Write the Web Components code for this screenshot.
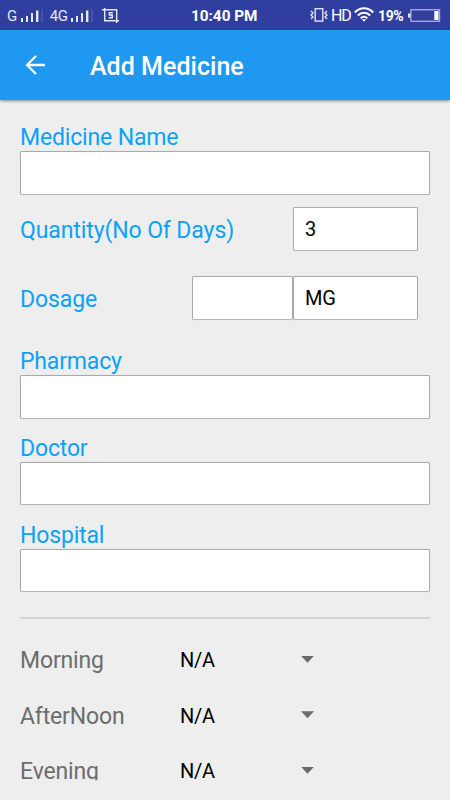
<!DOCTYPE html>
<html lang="en">
<head>
<meta charset="utf-8">
<title>Add Medicine</title>
<style>
html, body { margin: 0; height: 100%; overflow: hidden; background: #eeeeee; }
body { font-family: Roboto, "Noto Sans", sans-serif; color: #000; }
</style>
</head>
<body>
<medicine-screen></medicine-screen>
<script>
const define = (name, html) => customElements.define(name, class extends HTMLElement {
  constructor() {
    super();
    const t = document.createElement('template');
    t.innerHTML = html;
    this.attachShadow({ mode: 'open' }).append(t.content.cloneNode(true));
  }
});

define('signal-bars', `
<style>:host{display:block;width:23px;height:14px} svg{display:block}</style>
<svg width="23" height="14" viewBox="0 0 23 14"><g fill="#e4e7f8">
<rect x="0" y="9" width="2" height="4"/><rect x="5" y="7" width="2" height="6"/>
<rect x="10" y="4" width="2" height="9"/><rect x="15" y="1.5" width="2.4" height="11.5"/></g>
<rect x="20.5" y="0" width="1" height="13" fill="#5966b5"/></svg>`);

define('status-bar', `
<style>
:host{display:flex;height:30px;background:#303f9f;color:#fff;align-items:center;box-sizing:border-box}
.net{font-size:15px;letter-spacing:-.5px;color:#e4e7f8}
.left{display:flex;align-items:center;width:191px;padding-left:7px;box-sizing:border-box}
.left signal-bars{margin:2px 6px 0 4px}
.left .net{padding-top:3px;height:27px;line-height:27px}
.time{font-weight:700;font-size:15.3px;line-height:28px;padding-top:2px;width:119px;box-sizing:border-box;white-space:nowrap}
.right{display:flex;align-items:center;height:30px}
.hd{font-size:16px;padding:2px 5px 0 3px;line-height:28px;letter-spacing:-1.2px;width:18px;white-space:nowrap;box-sizing:content-box}
.pct{font-size:14px;font-weight:700;padding:3px 0 0 4px;width:30px;line-height:27px;letter-spacing:-.4px}
svg{display:block}
.s{margin:1px 0 0 2px}
</style>
<div class="left"><span class="net">G</span><signal-bars></signal-bars><span class="net">4G</span><signal-bars></signal-bars>
<svg class="s" width="17" height="15" viewBox="0 0 17 15" fill="none" stroke="#e4e7f8" stroke-width="1.4"><path d="M2.7 0V12.7H17M0 1.7H14.7V15"/><path d="M10.8 4.7H7.4V7.1H10.2V9.7H6.7" stroke-width="1.5"/></svg></div>
<div class="time">10:40 PM</div>
<div class="right">
<svg width="18" height="16" viewBox="0 0 18 16" fill="none" stroke="#dfe3f7" stroke-width="1.4"><rect x="5.2" y="1.7" width="7.6" height="12.4"/><path d="M1 4L3 6L1 8L3 10L1 12M17 4L15 6L17 8L15 10L17 12"/></svg>
<span class="hd">HD</span>
<svg width="20" height="16" viewBox="0 0 20 16" fill="none" stroke="#fff" stroke-width="2"><path d="M.8 5.5C6-.1 14-.1 19.2 5.5M3.8 8.5C7.5 4.8 12.5 4.8 16.2 8.5M6.7 11.3C8.8 9.4 11.2 9.4 13.3 11.3"/><path d="M7.8 12.2H12.2L10 14.8Z" fill="#fff" stroke="none"/></svg>
<span class="pct">19%</span>
<svg width="33" height="15" viewBox="0 0 33 15"><rect x="2.9" y="1.7" width="28.6" height="11.6" fill="none" stroke="#a1a8d6" stroke-width="1.4"/><rect x="0" y="5.2" width="2.4" height="4.5" rx="1" fill="#e4e7f8"/><rect x="26.3" y="3" width="4.2" height="9" fill="#fff"/></svg>
</div>`);

define('app-bar', `
<style>
:host{display:flex;height:70px;align-items:center;background:#1e98f1;color:#fff;box-shadow:0 1px 3px rgba(0,0,0,.45);position:relative}
svg{display:block;margin:0 45px 0 25px}
.title{font-size:25px;letter-spacing:.03px;font-weight:500;padding-top:3px;height:67px;line-height:67px;white-space:nowrap}
</style>
<svg width="20" height="20" viewBox="0 0 20 20" fill="none" stroke="#fff" stroke-width="2.3"><path d="M20 10H2M11 1L2 10L11 19"/></svg>
<span class="title"><slot></slot></span>`);

define('field-label', `
<style>:host{display:block;box-sizing:border-box;height:30px;padding-top:3px;font-size:23px;line-height:27px;letter-spacing:-.16px;color:#0ba2f8;white-space:nowrap}</style><slot></slot>`);

define('text-box', `
<style>:host{display:block;box-sizing:border-box;height:43.5px;border:1px solid #aaa;border-bottom-color:#b5b5b5;border-radius:2px;background:#fff;font-size:20px;letter-spacing:-.2px;line-height:43px;padding-left:11.4px;box-shadow:0 0 1px rgba(0,0,0,.15)}</style><slot></slot>`);

define('form-field', `
<style>:host{display:block}</style><field-label><slot></slot></field-label><text-box></text-box>`);

define('form-row', `
<style>:host{display:flex;align-items:center;justify-content:space-between;padding-right:12.5px}field-label{letter-spacing:-.1px}.boxes{display:flex}</style>
<field-label><slot></slot></field-label><div class="boxes"><slot name="boxes"></slot></div>`);

define('dose-row', `
<style>
:host{display:flex;height:55.5px;align-items:center}
.label{width:160px;font-size:23px;line-height:28px;letter-spacing:-.15px;color:#6d6d6d;padding-top:3px}
:host([clipped]) .label{clip-path:inset(0 0 6px 0)}
.value{width:121px;font-size:20px;letter-spacing:-.25px;padding-top:1px}
i{width:13px;height:7px;background:#6a6a6a;clip-path:polygon(0 0,100% 0,50% 100%);margin-bottom:1px}
</style>
<span class="label"><slot></slot></span><span class="value">N/A</span><i></i>`);

define('medicine-screen', `
<style>
:host{display:flex;flex-direction:column;height:800px;width:450px;background:#eee}
main{height:700px;padding:21px 20px 0;box-sizing:border-box}
.qty{margin-top:12.5px}.dosage{margin-top:25.5px}
.qty text-box,.mg{width:125px}.amount{width:100.5px}
.pharmacy{margin-top:25.7px}.gap{margin-top:13.3px}
hr{border:0;height:2px;background:#d4d4d4;margin:24.7px 0 13px}
</style>
<status-bar></status-bar>
<app-bar>Add Medicine</app-bar>
<main>
<form-field>Medicine Name</form-field>
<form-row class="qty">Quantity(No Of Days)<text-box slot="boxes">3</text-box></form-row>
<form-row class="dosage">Dosage<text-box slot="boxes" class="amount"></text-box><text-box slot="boxes" class="mg">MG</text-box></form-row>
<form-field class="pharmacy">Pharmacy</form-field>
<form-field class="gap">Doctor</form-field>
<form-field class="gap">Hospital</form-field>
<hr>
<dose-row>Morning</dose-row>
<dose-row>AfterNoon</dose-row>
<dose-row clipped>Evening</dose-row>
</main>`);
</script>
</body>
</html>
